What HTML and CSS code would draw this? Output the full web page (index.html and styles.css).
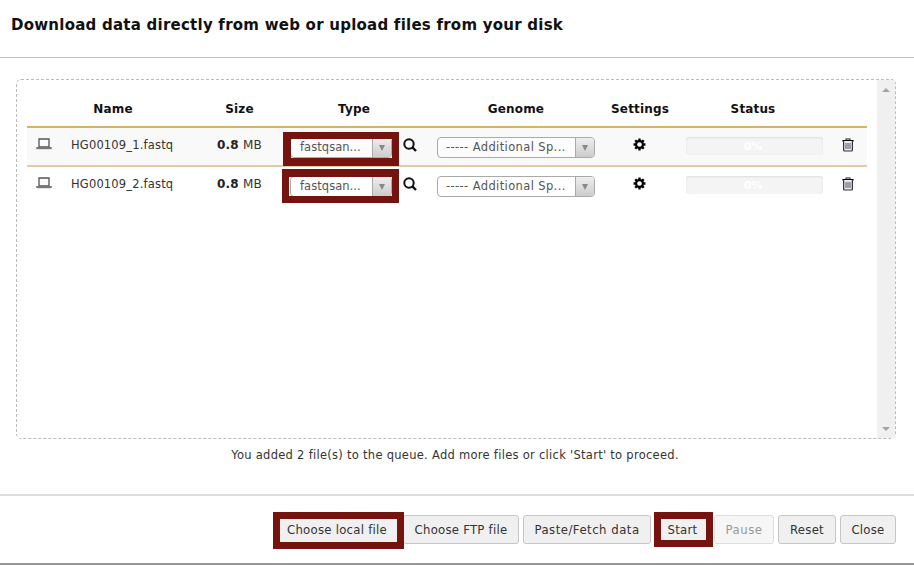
FILE: index.html
```
<!DOCTYPE html>
<html lang="en">
<head>
<meta charset="utf-8">
<title>Upload</title>
<link rel="stylesheet" href="styles.css">
</head>
<body>
<svg class="defs" aria-hidden="true">
  <symbol id="laptop" viewBox="0 0 16 12"><path d="M3 1h10v8H3z" fill="#fafafa" stroke="#555" stroke-width="1.3"/><path d="M.3 9h15.4v2.2H.3z" fill="#777"/></symbol>
  <symbol id="search" viewBox="0 0 14 14"><circle cx="6" cy="6" r="4.7" fill="none" stroke="#111" stroke-width="2"/><path d="M9.4 9.4l3.6 3.6" stroke="#111" stroke-width="2.4"/></symbol>
  <symbol id="gear" viewBox="0 0 14 14"><circle cx="7" cy="7" r="3.7" fill="none" stroke="#000" stroke-width="2.3"/><path d="M7 .6v2.5M7 10.9v2.5M.6 7h2.5M10.9 7h2.5M2.4 2.4l1.8 1.8M9.8 9.8l1.8 1.8M11.6 2.4L9.8 4.2M4.2 9.8l-1.8 1.8" stroke="#000" stroke-width="2.5"/></symbol>
  <symbol id="trash" viewBox="0 0 12 14"><path d="M4 2.2V1h4v1.2" fill="none" stroke="#222" stroke-width="1.1"/><path d="M.3 2.7h11.4" stroke="#111" stroke-width="1.4"/><path d="M1.6 3v9q0 1 1 1h6.8q1 0 1-1V3" fill="#e9e9ee" stroke="#333" stroke-width="1.2"/><path d="M4 5v6M6 5v6M8 5v6" stroke="#556" stroke-width="1"/></symbol>
</svg>
<header class="title">Download data directly from web or upload files from your disk</header>
<main class="body">
  <section class="dropzone">
    <div class="table">
      <div class="row head"><span></span><span class="h-name">Name</span><span>Size</span><span>Type</span><span>Genome</span><span>Settings</span><span>Status</span><span></span></div>
      <div class="row item odd">
        <svg class="i-laptop"><use href="#laptop"/></svg>
        <span class="name">HG00109_1.fastq</span>
        <span class="size"><b>0.8</b> MB</span>
        <div class="type"><div class="select"><span>fastqsan...</span><i></i></div><svg class="i-search"><use href="#search"/></svg><div class="mark mark-1"></div></div>
        <div class="select genome"><span>----- Additional Sp...</span><i></i></div>
        <svg class="i-gear"><use href="#gear"/></svg>
        <div class="progress">0%</div>
        <svg class="i-trash"><use href="#trash"/></svg>
      </div>
      <div class="row item">
        <svg class="i-laptop"><use href="#laptop"/></svg>
        <span class="name">HG00109_2.fastq</span>
        <span class="size"><b>0.8</b> MB</span>
        <div class="type"><div class="select"><span>fastqsan...</span><i></i></div><svg class="i-search"><use href="#search"/></svg><div class="mark mark-2"></div></div>
        <div class="select genome"><span>----- Additional Sp...</span><i></i></div>
        <svg class="i-gear"><use href="#gear"/></svg>
        <div class="progress">0%</div>
        <svg class="i-trash"><use href="#trash"/></svg>
      </div>
    </div>
    <div class="scrollbar"><i class="up"></i><i class="down"></i></div>
  </section>
  <p class="message"><span>You added 2 file(s) to the queue. Add more files or click 'Start' to proceed.</span></p>
</main>
<footer class="actions">
  <div class="btn local"><span>Choose local file</span><div class="mark mark-3"></div></div>
  <div class="btn ftp"><span>Choose FTP file</span></div>
  <div class="btn paste"><span>Paste/Fetch data</span></div>
  <div class="btn start"><span>Start</span><div class="mark mark-4"></div></div>
  <div class="btn pause"><span>Pause</span></div>
  <div class="btn reset"><span>Reset</span></div>
  <div class="btn close"><span>Close</span></div>
</footer>
</body>
</html>
```
FILE: styles.css
```
* { box-sizing: border-box; }
body { margin: 0; width: 914px; height: 565px; overflow: hidden; display: flex; flex-direction: column; background: #fff; color: #333; font: 11.5px "DejaVu Sans", sans-serif; border-bottom: 2px solid #969696; }
.defs { position: absolute; width: 0; height: 0; }
.title { height: 58px; padding: 15px 0 0 11px; border-bottom: 1px solid #c3c3c3; color: #111; font-size: 15px; font-weight: bold; line-height: 20px; white-space: nowrap; letter-spacing: .24px; }
.body { height: 436px; padding: 21px 18px 0 16px; }
.dropzone { height: 360px; border: 1px dashed #bbb; border-radius: 5px; display: flex; justify-content: space-between; }
.table { width: 850px; padding: 11px 0 0 10px; }
.row { width: 840px; display: grid; grid-template-columns: 34px 135px 87px 142px 182px 66px 160px 34px; align-items: center; justify-items: center; }
.head { height: 37px; border-bottom: 2px solid #d8b365; color: #111; font-size: 12px; font-weight: bold; letter-spacing: .15px; }
.h-name { margin-right: 31px; }
.item { height: 39px; padding-bottom: 1px; border-bottom: 2px solid #e3cda0; }
.item:last-child { border-color: transparent; }
.odd { background: #f9f9f9; }
.name { justify-self: start; margin: -3px 0 0 10px; letter-spacing: .17px; }
.size { font-size: 12px; letter-spacing: .2px; margin-top: -2px; }
.size b { color: #222; }
.type { width: 142px; height: 21px; padding-left: 7px; display: flex; position: relative; margin-top: 2px; }
.select { display: flex; width: 102px; height: 21px; border: 1px solid #aaa; border-radius: 4px; color: #555; line-height: 18px; overflow: hidden; background: #fff; }
.odd .select { background: #fcfcfc; }
.select span { flex: 1; padding-left: 9px; white-space: nowrap; letter-spacing: .05px; }
.select i { width: 19px; border-left: 1px solid #aaa; background: linear-gradient(#eee, #ccc); display: grid; place-items: center; }
.select i::after { content: ""; margin-top: 2px; border: 3px solid transparent; border-top: 6px solid #888; border-bottom: 0; }
.genome { width: 158px; margin-top: 2px; }
.genome span { padding-left: 8px; letter-spacing: .38px; }
.i-laptop { width: 16px; height: 12px; margin-top: -5px; }
.i-search { width: 14px; height: 14px; margin: 1px 0 0 11px; }
.i-gear { width: 13px; height: 13px; margin: -3px 1px 0 0; }
.i-trash { width: 12px; height: 14px; margin: -3px 4px 0 0; }
.progress { width: 137px; height: 18px; margin-left: 3px; border-radius: 3px; background: #f4f4f4; box-shadow: inset 0 1px 2px #ddd; color: #fff; font-size: 11px; font-weight: bold; text-align: center; line-height: 19px; padding-right: 3px; }
.scrollbar { width: 18px; background: #f0f0f0; display: flex; flex-direction: column; justify-content: space-between; align-items: center; padding: 8px 0 7px; }
.up, .down { border: 4px solid transparent; }
.up { border-top: 0; border-bottom-color: #a3a3a3; }
.down { border-bottom: 0; border-top-color: #a3a3a3; }
.message { margin: 8px 0 0; text-align: center; line-height: 16px; padding-right: 2px; letter-spacing: .28px; }
.actions { flex: 1; border-top: 2px solid #ddd; padding: 19px 18px 0 0; display: flex; justify-content: flex-end; gap: 4px; }
.btn { height: 29px; border: 1px solid #c6c6c6; border-radius: 3px; background: #f0f0f0; color: #333; font: 13px/28px "DejaVu Sans Condensed", "DejaVu Sans", sans-serif; text-align: center; position: relative; white-space: nowrap; letter-spacing: .25px; }
.local { width: 123px; padding-right: 1px; z-index: 1; } .ftp { width: 116px; } .paste { width: 128px; letter-spacing: .5px; } .start { width: 55px; z-index: 1; } .pause { width: 60px; background: #f6f6f6; color: #999; border-color: #ddd; letter-spacing: .5px; } .reset { width: 58px; } .close { width: 56px; }
.mark { position: absolute; border: 7px solid #75140f; }
.mark-1 { left: 0; top: -5px; width: 116px; height: 34px; border-left-width: 8px; border-bottom-width: 8px; }
.mark-2 { left: -1px; top: -7px; width: 117px; height: 34px; border-top-width: 8px; }
.mark-3 { left: -4px; top: -4px; width: 131px; height: 37px; }
.mark-4 { left: -2px; top: -4px; width: 59px; height: 35px; }
```
